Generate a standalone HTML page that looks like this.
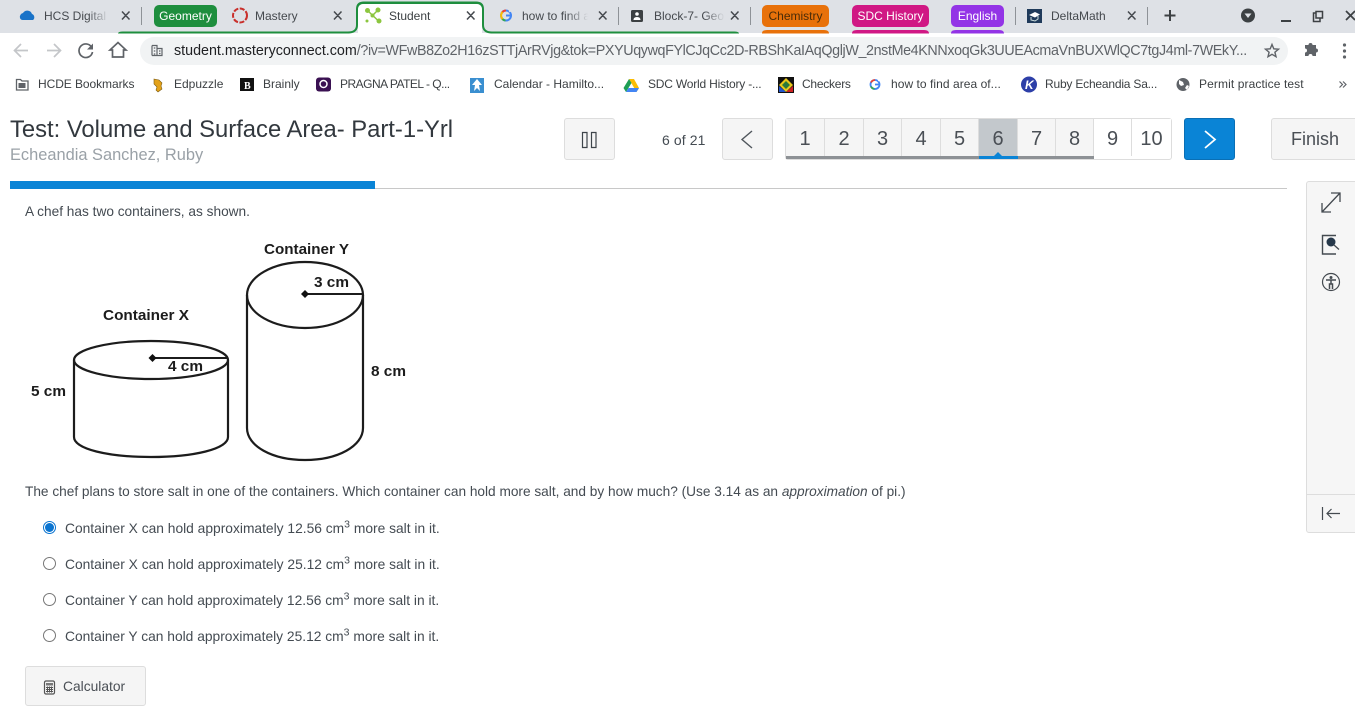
<!DOCTYPE html>
<html><head><meta charset="utf-8"><style>
html,body{margin:0;padding:0;background:#fff}
#p{position:relative;width:1355px;height:720px;overflow:hidden;background:#fff;font-family:"Liberation Sans",sans-serif}
.t{position:absolute;white-space:nowrap;line-height:16px}
.b{position:absolute;box-sizing:border-box;}
.tab{font-size:12px;color:#45494e;top:8px}
.bm{font-size:12px;color:#3c4043;top:76px}
.c{font-size:13.8px;color:#444b52}
.pill{position:absolute;top:5px;height:22px;border-radius:5px;color:#fff;font-size:12px;line-height:22px;text-align:center}
.sep{position:absolute;top:7px;width:1px;height:18px;background:#8e9297}
.cell{position:absolute;top:119px;height:37px;width:38px;text-align:center;font-size:20px;line-height:40px;color:#4a4f55;background:#f5f5f5;border-right:1px solid #ddd;box-sizing:border-box}
.btn{position:absolute;box-sizing:border-box;background:#f5f5f5;border:1px solid #ddd;border-radius:3px}
.r{position:absolute;left:43px;width:13px;height:13px;box-sizing:border-box;border:1px solid #777;border-radius:50%;background:#fff}
</style></head><body><div id="p">

<div class="b" style="left:0;top:0;width:1355px;height:33px;background:#dee1e6"></div>
<div class="b" style="left:0;top:33px;width:1355px;height:37px;background:#fff"></div>

<!-- tab group line -->
<svg style="position:absolute;left:0;top:0" width="1355" height="36">
<path d="M356 33V9Q356 1.500 364 1.500H476Q484 1.500 484 9V25Q484 31.500 492 31.500H734Q739 31.500 739 33.500H491 Q482 33 482 25V10Q482 4 476 4H364Q358 4 358 10V25Q358 33 349 33.500H118Q118 31.500 123 31.500H348Q356 31.500 356 25Z" fill="#1e8e3e"/>
<rect x="358" y="4" width="124" height="30" fill="#fff" rx="5"/>
<rect x="358" y="20" width="124" height="14" fill="#fff"/>
<path d="M762 33.500V33Q762 30 767 30H824Q829 30 829 33.500Z" fill="#e8710a"/>
<path d="M852 33.500V33Q852 30 857 30H924Q929 30 929 33.500Z" fill="#d01884"/>
<path d="M951 33.500V33Q951 30 956 30H999Q1004 30 1004 33.500Z" fill="#9334e6"/>
<!-- favicons -->
<path d="M20 18a4 4 0 0 1 3-5 5 5 0 0 1 9 1 3.500 3.500 0 0 1 1 6H23a3 3 0 0 1-3-2z" fill="#1a73c8"/>
<circle cx="240" cy="15.500" r="7" fill="none" stroke="#c9302c" stroke-width="2" stroke-dasharray="5 1.500"/>
<g stroke="#8cc63f" stroke-width="1.500"><path d="M367 10L378 20.500M373 15L378 10"/></g>
<g fill="#8cc63f"><circle cx="367.500" cy="10.500" r="2.500"/><circle cx="378" cy="10" r="2.500"/><circle cx="372.500" cy="15.500" r="2"/><circle cx="379" cy="21" r="2.500"/><circle cx="367" cy="21" r="1.500"/></g>
<circle cx="506" cy="15.500" r="5" fill="none" stroke="#4285f4" stroke-width="2"/><path d="M506 10.500a5 5 0 0 0-4.500 3" fill="none" stroke="#ea4335" stroke-width="2"/><path d="M501.500 17.500a5 5 0 0 0 4 3" fill="none" stroke="#34a853" stroke-width="2"/><path d="M502.500 12a5 5 0 0 0 0 7" fill="none" stroke="#fbbc05" stroke-width="2"/><path d="M506 15.500h5" stroke="#4285f4" stroke-width="2"/><path d="M509 11.500l2-1" stroke="#dee1e6" stroke-width="2"/>
<rect x="631" y="10" width="12" height="12" rx="1.500" fill="#3c4043"/><circle cx="637" cy="14" r="1.800" fill="#fff"/><path d="M633.500 20q0-3 3.500-3t3.500 3z" fill="#fff"/>
<rect x="1027" y="9" width="15" height="14" fill="#1f3a5a"/><path d="M1029 15l6-3 5 2.500-5 3z" fill="#fff"/><path d="M1031 17v3l4 1 3-2v-3" fill="none" stroke="#cdd" stroke-width="1"/>
<!-- new tab, profile, window -->
<path d="M1170 10v11M1164.500 15.500h11" stroke="#3c4043" stroke-width="2"/>
<circle cx="1248" cy="15.500" r="7" fill="#3c4043"/><path d="M1244.500 13.500h7l-3.500 4.500z" fill="#dee1e6"/>
<rect x="1281" y="20" width="10" height="2" fill="#3c4043"/>
<path d="M1316 13h-2.500v8.500h6.500v-3M1316 11.500h6.500v6.500H1316z" fill="none" stroke="#3c4043" stroke-width="1.500"/>
<path d="M1346 11l9 9M1355 11l-9 9" stroke="#3c4043" stroke-width="1.700"/>
</svg>

<div class="t tab" style="left:44px">HCS Digital I</div>
<div class="b" style="left:88px;top:5px;width:26px;height:22px;background:linear-gradient(90deg,rgba(222,225,230,0),#dee1e6 80%)"></div>
<div class="pill" style="left:154px;width:63px;background:#1e8e3e">Geometry</div>
<div class="t tab" style="left:255px">Mastery</div>
<div class="t tab" style="left:389px;color:#3c4043">Student</div>
<div class="t tab" style="left:522px">how to find a</div>
<div class="b" style="left:566px;top:5px;width:28px;height:22px;background:linear-gradient(90deg,rgba(222,225,230,0),#dee1e6 80%)"></div>
<div class="t tab" style="left:654px">Block-7- Geo</div>
<div class="b" style="left:704px;top:5px;width:23px;height:22px;background:linear-gradient(90deg,rgba(222,225,230,0),#dee1e6 90%)"></div>
<div class="pill" style="left:762px;width:67px;background:#e8710a;color:#4a2c08">Chemistry</div>
<div class="pill" style="left:852px;width:77px;background:#d01884">SDC History</div>
<div class="pill" style="left:951px;width:53px;background:#9334e6">English</div>
<div class="t tab" style="left:1051px">DeltaMath</div>
<div class="sep" style="left:141px"></div><div class="sep" style="left:618px"></div><div class="sep" style="left:750px"></div><div class="sep" style="left:1015px"></div><div class="sep" style="left:1147px"></div>
<svg style="position:absolute;left:0;top:0" width="1355" height="33" stroke="#45494e" stroke-width="1.500" fill="none">
<path d="M122 11.500l7.500 8M129.500 11.500l-7.500 8M334 11.500l7.500 8M341.500 11.500l-7.500 8M467 11.500l7.500 8M474.500 11.500l-7.500 8M599 11.500l7.500 8M606.500 11.500l-7.500 8M731 11.500l7.500 8M738.500 11.500l-7.500 8M1128 11.500l7.500 8M1135.500 11.500l-7.500 8"/>
</svg>

<!-- toolbar -->
<div class="b" style="left:140px;top:37px;width:1148px;height:28px;border-radius:14px;background:#f1f3f4"></div>
<svg style="position:absolute;left:0;top:33px" width="1355" height="37">
<path d="M28 17.500H15M21 11l-6.500 6.500L21 24" fill="none" stroke="#c4c6c9" stroke-width="1.700"/>
<path d="M47 17.500H60M54 11l6.500 6.500L54 24" fill="none" stroke="#c4c6c9" stroke-width="1.700"/>
<path d="M91.500 14A6.800 6.800 0 1 0 92.500 19" fill="none" stroke="#5f6368" stroke-width="1.700"/><path d="M93 10.500v6h-6z" fill="#5f6368"/>
<path d="M112.500 24v-7h-2.500l8-7.500 8 7.500h-2.500v7z" fill="none" stroke="#5f6368" stroke-width="1.700"/>
<path d="M152 12.500v10M152 12.500h5v10M157 15.500h5v7H152M153.800 15h1.500M153.800 18h1.500M153.800 21h1.500M159 18h1.500M159 20.500h1.500" fill="none" stroke="#5f6368" stroke-width="1.200"/>
<path d="M1272 11.500l1.800 4.300 4.700.4-3.600 3 1.100 4.500-4-2.400-4 2.400 1.100-4.500-3.600-3 4.700-.4z" fill="none" stroke="#5f6368" stroke-width="1.400"/>
<path d="M1305 15h3.500a2 2 0 0 1 4 0h3.500v3.500a2 2 0 0 1 0 4v3.500h-3.500a2 2 0 0 0-4 0H1305v-3.500a2 2 0 0 0 0-4z" fill="#5f6368" transform="translate(0,-3)"/>
<g fill="#5f6368"><circle cx="1344.500" cy="12" r="1.600"/><circle cx="1344.500" cy="18" r="1.600"/><circle cx="1344.500" cy="24" r="1.600"/></g>
</svg>
<div class="t" style="left:174px;top:43px;font-size:14.300px;color:#202124;">student.masteryconnect.com<span style="color:#5f6368;letter-spacing:-.37px">/?iv=WFwB8Zo2H16zSTTjArRVjg&amp;tok=PXYUqywqFYlCJqCc2D-RBShKaIAqQgljW_2nstMe4KNNxoqGk3UUEAcmaVnBUXWlQC7tgJ4ml-7WEkY...</span></div>

<!-- bookmarks -->
<svg style="position:absolute;left:0;top:70px" width="1355" height="28">
<path d="M16.500 9.500h4l1.500 1.500h6v9h-11.500z" fill="none" stroke="#5f6368" stroke-width="1.300"/><rect x="18.500" y="13" width="7" height="5" fill="#5f6368"/>
<path d="M154 9l5 1 3 3-1 3 1 3-4 3-2-2 1-3-3-3z" fill="#e3a21a" stroke="#7a5a10" stroke-width=".6"/>
<rect x="240" y="8" width="14" height="13" fill="#111"/><text x="244" y="19" font-size="10" font-weight="bold" fill="#fff" font-family="Liberation Serif">B</text>
<rect x="316" y="7.500" width="15" height="14" rx="3" fill="#3a1152"/><circle cx="323.500" cy="14" r="3.500" fill="none" stroke="#fff" stroke-width="1.500"/>
<path d="M470 8h14v15h-14z" fill="#3a8fd0"/><path d="M477 9l-5 6h3l-1 6 3-3 3 3-1-6h3z" fill="#fff"/>
<path d="M629 9h5l5 9-2.500 4z" fill="#fbbc05"/><path d="M629 9l-5.500 9 2.500 4 5.500-9z" fill="#1e9e55"/><path d="M626 22h10.500l2.500-4h-10.500z" fill="#4285f4"/>
<rect x="778" y="7" width="16" height="16" fill="#111"/><path d="M786 8l7 7-7 7-7-7z" fill="#e8c81a"/><path d="M786 11l4 4-4 4-4-4z" fill="#2a7a3a"/><path d="M779 16l7 6H779z" fill="#2255cc"/><path d="M793 16l-7 6h7z" fill="#cc2222"/>
<circle cx="875" cy="14.500" r="4.500" fill="none" stroke="#4285f4" stroke-width="1.800"/><path d="M875 10a4.500 4.500 0 0 0-4 2.500" fill="none" stroke="#ea4335" stroke-width="1.800"/><path d="M871 16.500a4.500 4.500 0 0 0 3.500 2.500" fill="none" stroke="#34a853" stroke-width="1.800"/><path d="M875 14.500h5" stroke="#4285f4" stroke-width="1.800"/><path d="M878 10.500l2-1" stroke="#fff" stroke-width="2"/>
<circle cx="1029" cy="14.500" r="8" fill="#2d3fa8"/><text x="1025" y="19" font-size="12" font-style="italic" font-weight="bold" fill="#fff">K</text>
<circle cx="1183" cy="14.500" r="6.500" fill="#5f6368"/><path d="M1179 10l4 2 1 3-3 1-2-2zM1185 18l2-3 2 1-2 4z" fill="#fff"/>
<path d="M1339.500 11.500l3 3-3 3M1343 11.500l3 3-3 3" fill="none" stroke="#5f6368" stroke-width="1.200"/>
</svg>
<div class="t bm" style="left:38px;letter-spacing:-.07px">HCDE Bookmarks</div>
<div class="t bm" style="left:174px">Edpuzzle</div>
<div class="t bm" style="left:263px">Brainly</div>
<div class="t bm" style="left:340px;letter-spacing:-.5px">PRAGNA PATEL - Q...</div>
<div class="t bm" style="left:494px">Calendar - Hamilto...</div>
<div class="t bm" style="left:648px;letter-spacing:-.2px">SDC World History -...</div>
<div class="t bm" style="left:802px;letter-spacing:-.25px">Checkers</div>
<div class="t bm" style="left:891px;letter-spacing:.05px">how to find area of...</div>
<div class="t bm" style="left:1045px;letter-spacing:-.2px">Ruby Echeandia Sa...</div>
<div class="t bm" style="left:1199px;letter-spacing:.1px">Permit practice test</div>

<!-- header -->
<div class="t" style="left:10px;top:116px;font-size:23.800px;line-height:28px;color:#32383e">Test: Volume and Surface Area- Part-1-Yrl</div>
<div class="t" style="left:10px;top:145px;font-size:16.400px;line-height:20px;color:#9aa1a7">Echeandia Sanchez, Ruby</div>

<div class="btn" style="left:564px;top:118px;width:51px;height:42px"></div>
<svg style="position:absolute;left:580px;top:130px" width="20" height="20"><path d="M2.500 2.500h4.500v15H2.500zM11.500 2.500h4.500v15h-4.500z" fill="none" stroke="#3e444a" stroke-width="1.200"/></svg>
<div class="t" style="left:662px;top:132px;font-size:14px;color:#444b52;letter-spacing:.1px">6 of 21</div>
<div class="btn" style="left:722px;top:118px;width:51px;height:42px"></div>
<svg style="position:absolute;left:738px;top:128px" width="20" height="22"><path d="M14 3L4 11.500 14 20" fill="none" stroke="#50565c" stroke-width="1.400"/></svg>

<div class="b" style="left:785px;top:118px;width:387px;height:42px;border:1px solid #ddd;border-radius:3px;background:#fff"></div>
<div class="cell" style="left:786px;width:39px">1</div>
<div class="cell" style="left:825px;width:39px">2</div>
<div class="cell" style="left:864px">3</div>
<div class="cell" style="left:902px;width:39px">4</div>
<div class="cell" style="left:941px;width:38px">5</div>
<div class="cell" style="left:979px;width:39px;background:#c3c8cc">6</div>
<div class="cell" style="left:1018px;width:38px">7</div>
<div class="cell" style="left:1056px;width:38px">8</div>
<div class="cell" style="left:1094px;width:38px;background:#fff">9</div>
<div class="cell" style="left:1132px;width:39px;background:#fff;border:0">10</div>
<div class="b" style="left:786px;top:156px;width:308px;height:3px;background:#8d9195"></div>
<div class="b" style="left:979px;top:156px;width:39px;height:3px;background:#0a84d6"></div>
<svg style="position:absolute;left:992px;top:151px" width="12" height="6"><path d="M1 6L6 1l5 5z" fill="#0a84d6"/></svg>

<div class="b" style="left:1184px;top:118px;width:51px;height:42px;background:#0a84d6;border:1px solid #0a6fb5;border-radius:3px"></div>
<svg style="position:absolute;left:1200px;top:128px" width="20" height="22"><path d="M5 3l10 8.500L5 20" fill="none" stroke="#fff" stroke-width="1.800"/></svg>
<div class="btn" style="left:1271px;top:118px;width:90px;height:42px"></div>
<div class="t" style="left:1291px;top:129px;font-size:18px;line-height:20px;color:#4a4f55">Finish</div>

<!-- progress -->
<div class="b" style="left:10px;top:188px;width:1277px;height:1px;background:#c8c8c8"></div>
<div class="b" style="left:10px;top:181px;width:365px;height:8px;background:#0a84d6"></div>

<!-- side panel -->
<div class="b" style="left:1306px;top:181px;width:60px;height:352px;background:#f6f6f6;border:1px solid #ddd;border-radius:3px"></div>
<div class="b" style="left:1307px;top:494px;width:48px;height:1px;background:#ddd"></div>
<svg style="position:absolute;left:1306px;top:181px" width="49" height="352" fill="none" stroke="#444a50">
<path d="M16 31L34 12M25 12h9v9M16 22v9h9" stroke-width="1.300"/>
<path d="M30 54.500H16.500V73H30" stroke-width="1.400"/>
<circle cx="25" cy="61" r="4.500" fill="#26384a" stroke="none"/><path d="M28 64l5 4.500" stroke-width="1.300"/>
<circle cx="25" cy="101" r="8.500" stroke-width="1.200"/><circle cx="25" cy="96.500" r="1.500" fill="#444a50" stroke="none"/><path d="M20 99h10M25 99v4M23.500 108v-5h3v5" stroke-width="1.500"/>
<path d="M16.500 326v13M34 332.500H21M25.500 328l-4.500 4.500 4.500 4.500" stroke-width="1.200"/>
</svg>

<!-- question -->
<div class="t c" style="left:25px;top:204px;font-size:13.680px">A chef has two containers, as shown.</div>

<svg style="position:absolute;left:0;top:230px" width="420" height="240" fill="none" stroke="#1c1c1c" stroke-width="2.200">
<ellipse cx="151" cy="130" rx="77" ry="19"/>
<path d="M74 130V207C74 219 108 227 151 227S228 219 228 207V130"/>
<ellipse cx="305" cy="65" rx="58" ry="33"/>
<path d="M247 65V198C247 216 272 230 305 230S363 216 363 198V65"/>
<path d="M152 128H228M305 64H363" stroke-width="2"/>
<path d="M152.500 124l4 4-4 4-4-4zM305 60l4 4-4 4-4-4z" fill="#111" stroke="none"/>
<g font-family="'Liberation Sans',sans-serif" font-weight="bold" font-size="15" fill="#1c1c1c" stroke="none">
<text x="264" y="24" textLength="85" lengthAdjust="spacingAndGlyphs">Container Y</text>
<text x="103" y="90" textLength="86" lengthAdjust="spacingAndGlyphs">Container X</text>
<text x="314" y="57" textLength="35" lengthAdjust="spacingAndGlyphs">3 cm</text>
<text x="168" y="141" textLength="35" lengthAdjust="spacingAndGlyphs">4 cm</text>
<text x="31" y="166" textLength="35" lengthAdjust="spacingAndGlyphs">5 cm</text>
<text x="371" y="146" textLength="35" lengthAdjust="spacingAndGlyphs">8 cm</text>
</g>
</svg>

<div class="t c" style="left:25px;top:484px;font-size:13.670px">The chef plans to store salt in one of the containers. Which container can hold more salt, and by how much? (Use 3.14 as an <i>approximation</i> of pi.)</div>

<div class="r" style="top:521px;border:1px solid #0a74d0"></div><div class="b" style="left:45px;top:523px;width:9px;height:9px;border-radius:50%;background:#0a74d0"></div>
<div class="r" style="top:557px"></div><div class="r" style="top:593px"></div><div class="r" style="top:629px"></div>
<div class="t c" style="left:65px;top:521px">Container X can hold approximately 12.56 cm<sup style="font-size:10.500px;line-height:0">3</sup> more salt in it.</div>
<div class="t c" style="left:65px;top:557px">Container X can hold approximately 25.12 cm<sup style="font-size:10.500px;line-height:0">3</sup> more salt in it.</div>
<div class="t c" style="left:65px;top:593px">Container Y can hold approximately 12.56 cm<sup style="font-size:10.500px;line-height:0">3</sup> more salt in it.</div>
<div class="t c" style="left:65px;top:629px">Container Y can hold approximately 25.12 cm<sup style="font-size:10.500px;line-height:0">3</sup> more salt in it.</div>

<div class="btn" style="left:25px;top:666px;width:121px;height:40px"></div>
<svg style="position:absolute;left:43px;top:680px" width="14" height="15"><rect x="1.500" y="1" width="10" height="13" rx="1.500" fill="none" stroke="#555" stroke-width="1.200"/><rect x="3" y="3" width="7" height="2.500" fill="#777"/><path d="M3 7.500h7M3 9.500h7M3 11.500h7M4.500 6.500v6M6.500 6.500v6M8.500 6.500v6" stroke="#555" stroke-width="1"/></svg>
<div class="t" style="left:63px;top:679px;font-size:13.800px;color:#4a4f55">Calculator</div>

</div></body></html>
